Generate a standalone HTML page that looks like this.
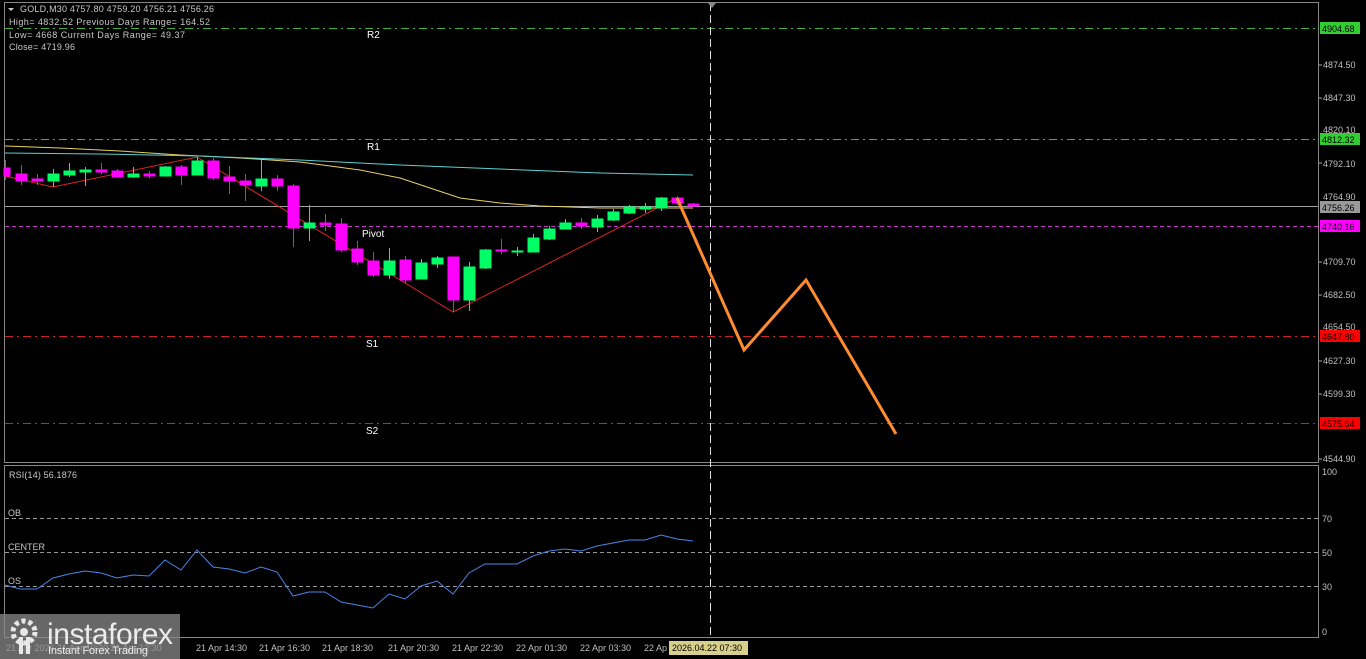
<!DOCTYPE html>
<html><head><meta charset="utf-8"><style>
html,body{margin:0;padding:0;background:#000;width:1366px;height:659px;overflow:hidden}
svg{display:block}
text{font-family:"Liberation Sans",sans-serif}
</style></head><body>
<svg width="1366" height="659" viewBox="0 0 1366 659">
<rect width="1366" height="659" fill="#000"/>
<rect x="4.5" y="2.5" width="1314" height="460" fill="none" stroke="#888"/>
<rect x="4.5" y="465.5" width="1314" height="172" fill="none" stroke="#888"/>
<g stroke-width="1" fill="none">
<line x1="5" y1="28.5" x2="1318" y2="28.5" stroke="#3cb33c" stroke-dasharray="8,4,2,4"/>
<line x1="5" y1="139.5" x2="1318" y2="139.5" stroke="#3cb33c" stroke-dasharray="8,4,2,4"/>
<line x1="5" y1="206.5" x2="1318" y2="206.5" stroke="#a0a0a0"/>
<line x1="5" y1="226.5" x2="1318" y2="226.5" stroke="#cc33cc" stroke-dasharray="4,3"/>
<line x1="5" y1="336.5" x2="1318" y2="336.5" stroke="#cc2222" stroke-dasharray="8,4,2,4"/>
<line x1="5" y1="423.5" x2="1318" y2="423.5" stroke="#cc2222" stroke-dasharray="8,4,2,4"/>
<line x1="710.5" y1="3" x2="710.5" y2="638" stroke="#dddddd" stroke-dasharray="8,4"/>
<line x1="5" y1="518.5" x2="1318" y2="518.5" stroke="#999" stroke-dasharray="4,3"/>
<line x1="5" y1="552.5" x2="1318" y2="552.5" stroke="#999" stroke-dasharray="4,3"/>
<line x1="5" y1="586.5" x2="1318" y2="586.5" stroke="#999" stroke-dasharray="4,3"/>
</g>
<polygon points="708,3 716,3 712,8" fill="#888"/>
<polyline fill="none" stroke="#e8d060" stroke-width="1" points="5,146 60,148 120,151 180,155 240,158 300,162 360,170 400,178 430,188 460,198 500,203 540,206 600,208 693,208"/>
<polyline fill="none" stroke="#5fd0d0" stroke-width="1" points="5,153 100,154 200,156 300,160 400,165 500,169 600,173 693,175"/>
<polyline fill="none" stroke="#dd2222" stroke-width="1" points="5,176 53,187 197,157 453,312 677,198"/>
<g stroke-width="1">
<g stroke="#ff00ff" fill="#ff00ff">
<line x1="5.5" y1="160" x2="5.5" y2="180"/><rect x="4" y="168" width="6" height="8"/>
<line x1="21.5" y1="165" x2="21.5" y2="185"/><rect x="16" y="174" width="11" height="7"/>
<line x1="37.5" y1="174" x2="37.5" y2="185"/><rect x="32" y="179" width="11" height="2"/>
<line x1="101.5" y1="163" x2="101.5" y2="174"/><rect x="96" y="170" width="11" height="2"/>
<line x1="117.5" y1="169" x2="117.5" y2="178"/><rect x="112" y="171" width="11" height="6"/>
<line x1="149.5" y1="171" x2="149.5" y2="178"/><rect x="144" y="174" width="11" height="2"/>
<line x1="181.5" y1="165" x2="181.5" y2="185"/><rect x="176" y="167" width="11" height="8"/>
<line x1="213.5" y1="158" x2="213.5" y2="180"/><rect x="208" y="161" width="11" height="17"/>
<line x1="229.5" y1="166" x2="229.5" y2="194"/><rect x="224" y="177" width="11" height="4"/>
<line x1="245.5" y1="174" x2="245.5" y2="201"/><rect x="240" y="181" width="11" height="4"/>
<line x1="277.5" y1="175" x2="277.5" y2="191"/><rect x="272" y="179" width="11" height="7"/>
<line x1="293.5" y1="184" x2="293.5" y2="247"/><rect x="288" y="186" width="11" height="42"/>
<line x1="325.5" y1="214" x2="325.5" y2="231"/><rect x="320" y="223" width="11" height="2"/>
<line x1="341.5" y1="218" x2="341.5" y2="252"/><rect x="336" y="224" width="11" height="26"/>
<line x1="357.5" y1="241" x2="357.5" y2="265"/><rect x="352" y="249" width="11" height="13"/>
<line x1="373.5" y1="252" x2="373.5" y2="277"/><rect x="368" y="261" width="11" height="14"/>
<line x1="405.5" y1="256" x2="405.5" y2="283"/><rect x="400" y="260" width="11" height="20"/>
<line x1="453.5" y1="257" x2="453.5" y2="312"/><rect x="448" y="257" width="11" height="43"/>
<line x1="501.5" y1="239" x2="501.5" y2="254"/><rect x="496" y="250" width="11" height="1"/>
<line x1="581.5" y1="218" x2="581.5" y2="229"/><rect x="576" y="223" width="11" height="3"/>
<line x1="677.5" y1="196" x2="677.5" y2="205"/><rect x="672" y="198" width="11" height="5"/>
<line x1="693.5" y1="203" x2="693.5" y2="207"/><rect x="688" y="204" width="11" height="2"/>
</g>
<g stroke="#00ff66" fill="#00ff66">
<line x1="53.5" y1="169" x2="53.5" y2="187"/><rect x="48" y="174" width="11" height="7"/>
<line x1="69.5" y1="163" x2="69.5" y2="177"/><rect x="64" y="171" width="11" height="4"/>
<line x1="85.5" y1="167" x2="85.5" y2="186"/><rect x="80" y="170" width="11" height="2"/>
<line x1="133.5" y1="167" x2="133.5" y2="178"/><rect x="128" y="174" width="11" height="3"/>
<line x1="165.5" y1="166" x2="165.5" y2="176"/><rect x="160" y="167" width="11" height="9"/>
<line x1="197.5" y1="157" x2="197.5" y2="175"/><rect x="192" y="161" width="11" height="14"/>
<line x1="261.5" y1="160" x2="261.5" y2="191"/><rect x="256" y="179" width="11" height="7"/>
<line x1="309.5" y1="205" x2="309.5" y2="241"/><rect x="304" y="223" width="11" height="5"/>
<line x1="389.5" y1="248" x2="389.5" y2="279"/><rect x="384" y="261" width="11" height="14"/>
<line x1="421.5" y1="259" x2="421.5" y2="279"/><rect x="416" y="263" width="11" height="16"/>
<line x1="437.5" y1="256" x2="437.5" y2="268"/><rect x="432" y="258" width="11" height="6"/>
<line x1="469.5" y1="262" x2="469.5" y2="311"/><rect x="464" y="267" width="11" height="33"/>
<line x1="485.5" y1="249" x2="485.5" y2="269"/><rect x="480" y="250" width="11" height="18"/>
<line x1="517.5" y1="247" x2="517.5" y2="256"/><rect x="512" y="251" width="11" height="1"/>
<line x1="533.5" y1="234" x2="533.5" y2="252"/><rect x="528" y="238" width="11" height="14"/>
<line x1="549.5" y1="226" x2="549.5" y2="240"/><rect x="544" y="229" width="11" height="10"/>
<line x1="565.5" y1="219" x2="565.5" y2="229"/><rect x="560" y="223" width="11" height="6"/>
<line x1="597.5" y1="215" x2="597.5" y2="232"/><rect x="592" y="219" width="11" height="8"/>
<line x1="613.5" y1="209" x2="613.5" y2="221"/><rect x="608" y="212" width="11" height="8"/>
<line x1="629.5" y1="205" x2="629.5" y2="214"/><rect x="624" y="207" width="11" height="6"/>
<line x1="645.5" y1="203" x2="645.5" y2="213"/><rect x="640" y="207" width="11" height="2"/>
<line x1="661.5" y1="197" x2="661.5" y2="211"/><rect x="656" y="198" width="11" height="10"/>
</g>
</g>
<polyline fill="none" stroke="#ff8c30" stroke-width="3" points="677,198 744,350 806,280 896,434"/>
<g fill="#fff" font-size="10">
<text x="367" y="38">R2</text><text x="367" y="150">R1</text>
<text x="362" y="237">Pivot</text><text x="366" y="347">S1</text><text x="366" y="434">S2</text>
</g>
<g fill="#c8c8c8" font-size="9">
<polygon points="8,8 14,8 11,11" fill="#c8c8c8"/>
<text x="20" y="12" textLength="194">GOLD,M30  4757.80 4759.20 4756.21 4756.26</text>
<text x="9" y="25" textLength="201">High= 4832.52    Previous Days Range= 164.52</text>
<text x="9" y="38" textLength="176">Low= 4668    Current Days Range= 49.37</text>
<text x="9" y="50" textLength="66">Close= 4719.96</text>
<text x="9" y="478" textLength="68">RSI(14) 56.1876</text>
<text x="8" y="516">OB</text><text x="8" y="550">CENTER</text><text x="8" y="584">OS</text>
</g>
<g fill="#c0c0c0" font-size="9">
<text x="1323" y="68">4874.50</text>
<text x="1323" y="101">4847.30</text>
<text x="1323" y="133">4820.10</text>
<text x="1323" y="167">4792.10</text>
<text x="1323" y="200">4764.90</text>
<text x="1323" y="265">4709.70</text>
<text x="1323" y="298">4682.50</text>
<text x="1323" y="330">4654.50</text>
<text x="1323" y="364">4627.30</text>
<text x="1323" y="397">4599.30</text>
<text x="1323" y="462">4544.90</text>
<text x="1322" y="475">100</text><text x="1322" y="522">70</text><text x="1322" y="556">50</text>
<text x="1322" y="590">30</text><text x="1322" y="635">0</text>
</g>
<g stroke="#aaa"><line x1="1319" y1="65" x2="1322" y2="65"/><line x1="1319" y1="98" x2="1322" y2="98"/><line x1="1319" y1="163" x2="1322" y2="163"/><line x1="1319" y1="262" x2="1322" y2="262"/><line x1="1319" y1="295" x2="1322" y2="295"/><line x1="1319" y1="361" x2="1322" y2="361"/><line x1="1319" y1="394" x2="1322" y2="394"/><line x1="1319" y1="459" x2="1322" y2="459"/></g>
<g font-size="9">
<rect x="1320" y="22" width="40" height="12" fill="#33cc33"/><text x="1322" y="32" fill="#000">4904.68</text>
<rect x="1320" y="133" width="40" height="12" fill="#33cc33"/><text x="1322" y="143" fill="#000">4812.32</text>
<rect x="1320" y="201" width="40" height="12" fill="#9a9a9a"/><text x="1322" y="211" fill="#000">4756.26</text>
<rect x="1320" y="220" width="40" height="12" fill="#ff00ff"/><text x="1322" y="230" fill="#000">4740.16</text>
<rect x="1320" y="330" width="40" height="12" fill="#ff0000"/><text x="1322" y="340" fill="#000">4647.80</text>
<rect x="1320" y="417" width="40" height="12" fill="#ff0000"/><text x="1322" y="427" fill="#000">4575.64</text>
</g>
<polyline fill="none" stroke="#4a86e8" stroke-width="1" points="5,585 20,589 37,589 53,578 69,574 85,571 101,573 117,578 133,575 149,576 165,560 181,570 197,550 213,567 229,569 245,573 261,567 277,572 293,596 309,592 325,592 341,602 357,605 373,608 389,594 405,599 421,586 437,581 453,594 469,573 485,564 501,564 517,564 533,556 549,551 565,549 581,551 597,546 613,543 629,540 645,540 661,535 677,539 693,541"/>
<g fill="#c0c0c0" font-size="9">
<text x="6" y="651">21 Apr 2026   21 Apr 10:30   21 Apr 12:30</text>
<text x="196" y="651">21 Apr 14:30</text><text x="259" y="651">21 Apr 16:30</text>
<text x="322" y="651">21 Apr 18:30</text><text x="388" y="651">21 Apr 20:30</text>
<text x="452" y="651">21 Apr 22:30</text><text x="516" y="651">22 Apr 01:30</text>
<text x="580" y="651">22 Apr 03:30</text><text x="644" y="651">22 Ap</text>
</g>
<rect x="669" y="641" width="79" height="14" fill="#d8d08a"/>
<text x="672" y="651" font-size="9" fill="#000">2026.04.22 07:30</text>
<rect x="0" y="614" width="180" height="45" fill="#8a8a8a" opacity="0.75"/>
<g fill="#e8e8e8">
<circle cx="24" cy="632" r="11" fill="none" stroke="#e8e8e8" stroke-width="5" stroke-dasharray="4,3"/>
<circle cx="24" cy="632" r="4"/>
<rect x="19" y="637" width="4" height="17"/><rect x="26" y="637" width="4" height="17"/>
<text x="47" y="644" font-size="30" fill="#ececec" textLength="126">instaforex</text>
<text x="48" y="654" font-size="11" fill="#ececec" textLength="100">Instant Forex Trading</text>
</g>
</svg>
</body></html>
